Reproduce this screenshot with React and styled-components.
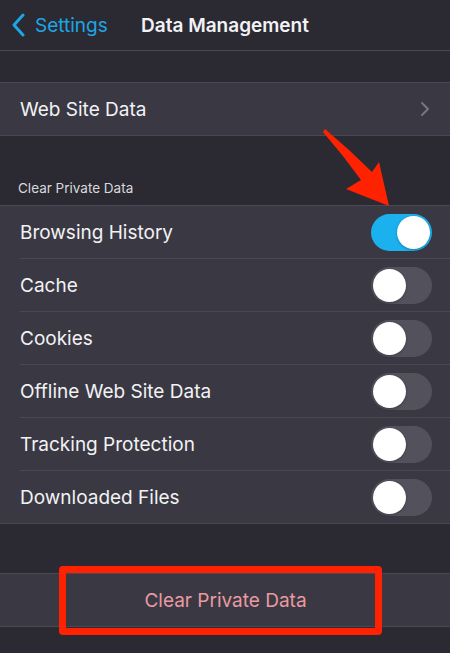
import React from 'react'
import styled, { createGlobalStyle } from 'styled-components'

const color = {
    page: '#2b2a32',
    row: '#3a3943',
    sep: '#4a4953',
    blue: '#1da6e6',
    toggleOn: '#1bb0ee',
    toggleOff: '#53525c',
    text: '#f2f2f4',
    sub: '#d9d9de',
    chevron: '#77767f',
    danger: '#ea9aa1',
    red: '#ff2200',
}

const GlobalStyle = createGlobalStyle`
    html, body {
        margin: 0;
        padding: 0;
        background: ${color.page};
    }
    body {
        font-family: Inter, "Liberation Sans", sans-serif;
        -webkit-font-smoothing: antialiased;
    }
`

const Page = styled.div`
    position: relative;
    width: 450px;
    height: 653px;
    overflow: hidden;
    background: ${color.page};
    display: flex;
    flex-direction: column;
`

const NavBar = styled.div`
    position: relative;
    height: 50px;
    flex-shrink: 0;
    display: flex;
    align-items: center;
    justify-content: center;
    border-bottom: 1px solid ${color.sep};
`

const BackButton = styled.div`
    position: absolute;
    left: 11px;
    top: 0;
    height: 50px;
    display: flex;
    align-items: center;
    gap: 10px;
    color: ${color.blue};
    font-size: 19px;
`

const Title = styled.div`
    color: ${color.text};
    font-size: 19px;
    font-weight: 600;
`

const Spacer = styled.div`
    height: ${p => p.$h}px;
    flex-shrink: 0;
`

const SectionHeader = styled.div`
    height: 69px;
    flex-shrink: 0;
    display: flex;
    align-items: flex-end;
    padding: 0 0 9px 18px;
    box-sizing: border-box;
    color: ${color.sub};
    font-size: 13.5px;
`

const Group = styled.div`
    flex-shrink: 0;
    background: ${color.row};
    border-top: 1px solid ${color.sep};
    border-bottom: 1px solid ${color.sep};
`

const Row = styled.div`
    height: 52px;
    display: flex;
    align-items: center;
    justify-content: ${p => p.$center ? 'center' : 'space-between'};
    padding-right: 19px;
    padding-left: ${p => p.$first ? 20 : 0}px;
    margin-left: ${p => p.$first ? 0 : 20}px;
    border-top: ${p => p.$first ? 'none' : `1px solid ${color.sep}`};
`

const Label = styled.span`
    color: ${p => p.$danger ? color.danger : color.text};
    font-size: 19px;
`

const Track = styled.div`
    width: 61px;
    height: 37px;
    border-radius: 19px;
    background: ${p => p.$on ? color.toggleOn : color.toggleOff};
    display: flex;
    align-items: center;
    justify-content: ${p => p.$on ? 'flex-end' : 'flex-start'};
    padding: 0 2px;
    box-sizing: border-box;
    margin-right: -1px;
`

const Knob = styled.div`
    width: 33px;
    height: 33px;
    border-radius: 50%;
    background: #fff;
    box-shadow: 0 1px 3px rgba(0, 0, 0, 0.25);
`

const Highlight = styled.div`
    position: absolute;
    left: 59px;
    top: 566px;
    width: 323px;
    height: 69px;
    box-sizing: border-box;
    border: 7px solid ${color.red};
    border-radius: 4px;
`

const Arrow = styled.svg`
    position: absolute;
    left: 0;
    top: 0;
    pointer-events: none;
`

function Toggle({ on }) {
    return (
        <Track $on={on}>
            <Knob />
        </Track>
    )
}

const items = [
    ['Browsing History', true],
    ['Cache', false],
    ['Cookies', false],
    ['Offline Web Site Data', false],
    ['Tracking Protection', false],
    ['Downloaded Files', false],
]

export default function App() {
    return (
        <Page>
            <GlobalStyle />
            <NavBar>
                <BackButton>
                    <svg width="14" height="24" viewBox="0 0 14 24">
                        <path d="M12 2 L3 12 L12 22" fill="none" stroke={color.blue} strokeWidth="3" strokeLinecap="round" strokeLinejoin="round" />
                    </svg>
                    Settings
                </BackButton>
                <Title>Data Management</Title>
            </NavBar>
            <Spacer $h={31} />
            <Group>
                <Row $first>
                    <Label>Web Site Data</Label>
                    <svg width="10" height="16" viewBox="0 0 10 16" style={{ marginRight: 1 }}>
                        <path d="M2 2 L8 8 L2 14" fill="none" stroke={color.chevron} strokeWidth="2" strokeLinecap="round" strokeLinejoin="round" />
                    </svg>
                </Row>
            </Group>
            <SectionHeader>Clear Private Data</SectionHeader>
            <Group>
                {items.map(([name, on], i) => (
                    <Row key={name} $first={i === 0}>
                        <Label>{name}</Label>
                        <Toggle on={on} />
                    </Row>
                ))}
            </Group>
            <Spacer $h={49} />
            <Group>
                <Row $first $center>
                    <Label $danger>Clear Private Data</Label>
                </Row>
            </Group>

            <Highlight />
            <Arrow width="450" height="653" viewBox="0 0 450 653">
                <path d="M325 129 Q350 150 372 172 L379 162 L389 206 L346 189 L361 180 Q343 155 323 132 Z" fill={color.red} />
            </Arrow>
        </Page>
    )
}
